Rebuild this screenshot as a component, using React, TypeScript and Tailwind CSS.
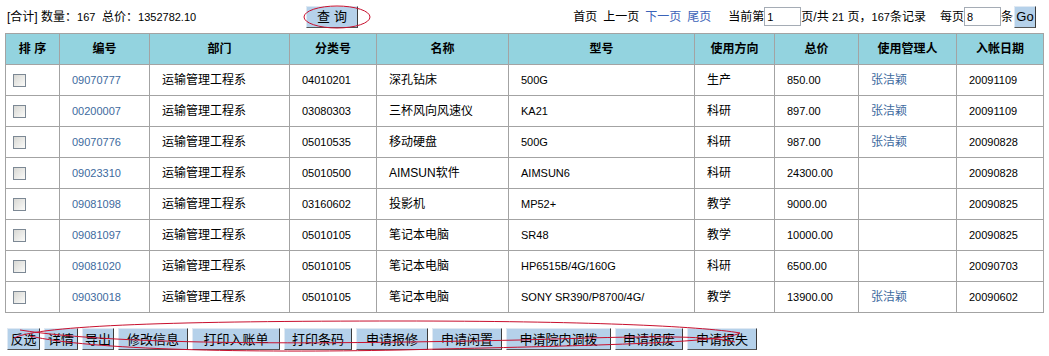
import React from 'react';

type Row = {
  code: string;
  dept: string;
  cls: string;
  name: string;
  model: string;
  use: string;
  price: string;
  keeper: string;
  date: string;
};

const ROWS: Row[] = [
  { code: '09070777', dept: '运输管理工程系', cls: '04010201', name: '深孔钻床', model: '500G', use: '生产', price: '850.00', keeper: '张洁颖', date: '20091109' },
  { code: '00200007', dept: '运输管理工程系', cls: '03080303', name: '三杯风向风速仪', model: 'KA21', use: '科研', price: '897.00', keeper: '张洁颖', date: '20091109' },
  { code: '09070776', dept: '运输管理工程系', cls: '05010535', name: '移动硬盘', model: '500G', use: '科研', price: '987.00', keeper: '张洁颖', date: '20090828' },
  { code: '09023310', dept: '运输管理工程系', cls: '05010500', name: 'AIMSUN软件', model: 'AIMSUN6', use: '科研', price: '24300.00', keeper: '', date: '20090828' },
  { code: '09081098', dept: '运输管理工程系', cls: '03160602', name: '投影机', model: 'MP52+', use: '教学', price: '9000.00', keeper: '', date: '20090825' },
  { code: '09081097', dept: '运输管理工程系', cls: '05010105', name: '笔记本电脑', model: 'SR48', use: '教学', price: '10000.00', keeper: '', date: '20090825' },
  { code: '09081020', dept: '运输管理工程系', cls: '05010105', name: '笔记本电脑', model: 'HP6515B/4G/160G', use: '科研', price: '6500.00', keeper: '', date: '20090703' },
  { code: '09030018', dept: '运输管理工程系', cls: '05010105', name: '笔记本电脑', model: 'SONY SR390/P8700/4G/', use: '教学', price: '13900.00', keeper: '张洁颖', date: '20090602' },
];

const HEADERS = ['排 序', '编号', '部门', '分类号', '名称', '型号', '使用方向', '总价', '使用管理人', '入帐日期'];
const WIDTHS = ['w-[54px]', 'w-[90px]', 'w-[140px]', 'w-[87px]', 'w-[132px]', 'w-[186px]', 'w-[80px]', 'w-[84px]', 'w-[98px]', 'w-[87px]'];

const ACTIONS: { label: string; w: string }[] = [
  { label: '反选', w: 'w-[33px]' },
  { label: '详情', w: 'w-[34px]' },
  { label: '导出', w: 'w-[32px]' },
  { label: '修改信息', w: 'w-[70px]' },
  { label: '打印入账单', w: 'w-[88px]' },
  { label: '打印条码', w: 'w-[68px]' },
  { label: '申请报修', w: 'w-[72px]' },
  { label: '申请闲置', w: 'w-[70px]' },
  { label: '申请院内调拨', w: 'w-[105px]' },
  { label: '申请报废', w: 'w-[68px]' },
  { label: '申请报失', w: 'w-[70px]' },
];

const btn =
  'h-[22px] bg-[#b5d1ea] border border-[#dfe9f3] border-r-[#3a3a3a] border-b-[#555] text-[13px] text-black leading-none';

const cell = 'border border-[#a3a3a3] px-3 text-left align-middle';
// latin/number cells read a touch smaller in the original
const num = `${cell} text-[11px]`;

function Checkbox() {
  return (
    <div className="h-[13px] w-[13px] border border-[#7c8894] bg-gradient-to-br from-[#d8d8d4] to-[#fbfbf9]" />
  );
}

export default function App() {
  return (
    <div
      className="relative w-[1049px] h-[356px] bg-white text-[12px] text-black"
      style={{ fontFamily: '"Liberation Sans", "Noto Sans CJK SC", sans-serif' }}
    >
      {/* top bar */}
      <div className="flex h-[33px] items-center pl-[7px] pr-[13px]">
        <span className="w-[299px]">
          [合计] 数量：<span className="text-[11px]">167</span>&nbsp;&nbsp;总价：
          <span className="text-[11px]">1352782.10</span>
        </span>
        <button type="button" className={`${btn} w-[52px] tracking-[4px] pl-[4px]`}>
          查询
        </button>
        <div className="ml-auto flex items-center">
          <span>首页</span>
          <span className="ml-[6px]">上一页</span>
          <span className="ml-[6px] text-[#3b63b8]">下一页</span>
          <span className="ml-[6px] text-[#3b63b8]">尾页</span>
          <span className="ml-[17px]">当前第</span>
          <input
            readOnly
            value="1"
            className="h-[19px] w-[37px] border border-[#a5acb5] px-[2px] text-[11px] outline-none"
          />
          <span>
            页/共 <span className="text-[11px]">21</span> 页，<span className="text-[11px]">167</span>条记录
          </span>
          <span className="ml-[14px]">每页</span>
          <input
            readOnly
            value="8"
            className="h-[19px] w-[37px] border border-[#a5acb5] px-[2px] text-[11px] outline-none"
          />
          <span>条</span>
          <button type="button" className={`${btn} ml-[1px] w-[22px] h-[21px] text-[12px]`}>
            Go
          </button>
        </div>
      </div>

      {/* list */}
      <div className="pl-[5px]">
        <table className="table-fixed border-collapse w-[1038px]">
          <colgroup>
            {WIDTHS.map((w, i) => (
              <col key={i} className={w} />
            ))}
          </colgroup>
          <thead>
            <tr className="h-[31px] bg-[#93d3df]">
              {HEADERS.map((h) => (
                <th key={h} className="border border-[#a3a3a3] text-center font-bold whitespace-pre">
                  {h}
                </th>
              ))}
            </tr>
          </thead>
          <tbody>
            {ROWS.map((r) => (
              <tr key={r.code} className="h-[31px]">
                <td className="border border-[#a3a3a3] pl-[7px] align-middle">
                  <Checkbox />
                </td>
                <td className={`${num} text-[#3d6a9e]`}>{r.code}</td>
                <td className={cell}>{r.dept}</td>
                <td className={num}>{r.cls}</td>
                <td className={cell}>{r.name}</td>
                <td className={num}>{r.model}</td>
                <td className={cell}>{r.use}</td>
                <td className={num}>{r.price}</td>
                <td className={`${cell} text-[#3d6a9e]`}>{r.keeper}</td>
                <td className={num}>{r.date}</td>
              </tr>
            ))}
          </tbody>
        </table>
      </div>

      {/* actions */}
      <div className="mt-[15px] flex gap-[4px] pl-[7px]">
        {ACTIONS.map((a) => (
          <button key={a.label} type="button" className={`${btn} ${a.w}`}>
            {a.label}
          </button>
        ))}
      </div>

      {/* hand-drawn red marks */}
      <svg className="pointer-events-none absolute inset-0" width="1049" height="356" fill="none">
        <ellipse cx="337" cy="17" rx="33" ry="11" stroke="#c8102e" strokeWidth="1" />
        <path
          d="M14 338 C 40 325, 180 321, 400 321 C 580 321, 700 326, 740 333 C 720 344, 560 346, 400 350 C 250 353, 90 350, 30 336"
          stroke="#c8102e"
          strokeWidth="1"
        />
        <path
          d="M20 330 C 120 346, 330 344, 520 340 C 620 337, 700 334, 735 342"
          stroke="#c8102e"
          strokeWidth="1"
        />
      </svg>
    </div>
  );
}
